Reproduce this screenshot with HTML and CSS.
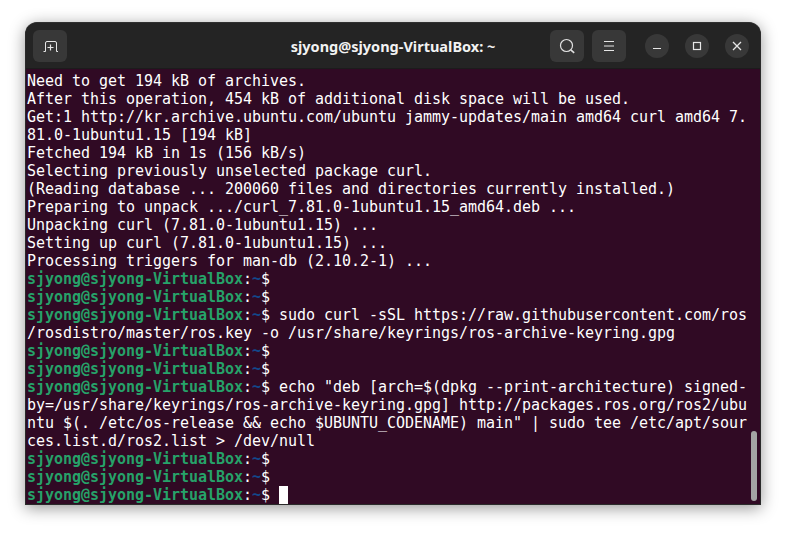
FILE: index.html
```html
<!DOCTYPE html>
<html lang="en">
<head>
<meta charset="utf-8">
<title>sjyong@sjyong-VirtualBox: ~</title>
<link rel="stylesheet" href="styles.css">
</head>
<body>
<div class="window">
<header class="titlebar">
<div class="left">
<button class="tool"><svg width="16" height="12" viewBox="0 0 16 12" fill="none" stroke="#e6e6e6" stroke-width="1"><path d="M1.500 11.500h2V3a1.500 1.500 0 0 1 1.500-1.500h8a1.500 1.500 0 0 1 1.500 1.500v8.500h1.500"/><path d="M8.500 4.500v6M5.500 7.500h6" stroke-width="1.200"/></svg></button>
</div>
<div class="title">sjyong@sjyong-VirtualBox: ~</div>
<div class="right">
<div class="tools">
<button class="tool"><svg width="16" height="16" viewBox="0 0 16 16" fill="none" stroke="#e0e0e0" stroke-width="1.200"><circle cx="7.500" cy="7.500" r="6"/><path d="M11.800 11.800l3.400 3" stroke-width="1.600"/></svg></button>
<button class="tool"><svg width="12" height="12" viewBox="0 0 12 12" fill="none" stroke="#e6e6e6" stroke-width="1"><path d="M1 1.500h10M1 6h10M1 10.500h10"/></svg></button>
</div>
<div class="controls">
<button class="ctl"><svg width="10" height="10" viewBox="0 0 10 10" fill="none" stroke="#e6e6e6" stroke-width="1.200"><path d="M1 7.500h8"/></svg></button>
<button class="ctl"><svg width="10" height="10" viewBox="0 0 10 10" fill="none" stroke="#e6e6e6" stroke-width="1.200"><rect x="1.500" y="1.500" width="7" height="7"/></svg></button>
<button class="ctl"><svg width="10" height="10" viewBox="0 0 10 10" fill="none" stroke="#e6e6e6" stroke-width="1.300"><path d="M1 1l8 8M9 1l-8 8"/></svg></button>
</div>
</div>
</header>
<main class="terminal">
<div class="output">
<div class="line">Need to get 194 kB of archives.</div>
<div class="line">After this operation, 454 kB of additional disk space will be used.</div>
<div class="line">Get:1 http://kr.archive.ubuntu.com/ubuntu jammy-updates/main amd64 curl amd64 7.</div>
<div class="line">81.0-1ubuntu1.15 [194 kB]</div>
<div class="line">Fetched 194 kB in 1s (156 kB/s)</div>
<div class="line">Selecting previously unselected package curl.</div>
<div class="line">(Reading database ... 200060 files and directories currently installed.)</div>
<div class="line">Preparing to unpack .../curl_7.81.0-1ubuntu1.15_amd64.deb ...</div>
<div class="line">Unpacking curl (7.81.0-1ubuntu1.15) ...</div>
<div class="line">Setting up curl (7.81.0-1ubuntu1.15) ...</div>
<div class="line">Processing triggers for man-db (2.10.2-1) ...</div>
<div class="line"><b class="user">sjyong@sjyong-VirtualBox</b>:<b class="path">~</b>$</div>
<div class="line"><b class="user">sjyong@sjyong-VirtualBox</b>:<b class="path">~</b>$</div>
<div class="line"><b class="user">sjyong@sjyong-VirtualBox</b>:<b class="path">~</b>$ sudo curl -sSL https://raw.githubusercontent.com/ros</div>
<div class="line">/rosdistro/master/ros.key -o /usr/share/keyrings/ros-archive-keyring.gpg</div>
<div class="line"><b class="user">sjyong@sjyong-VirtualBox</b>:<b class="path">~</b>$</div>
<div class="line"><b class="user">sjyong@sjyong-VirtualBox</b>:<b class="path">~</b>$</div>
<div class="line"><b class="user">sjyong@sjyong-VirtualBox</b>:<b class="path">~</b>$ echo "deb [arch=$(dpkg --print-architecture) signed-</div>
<div class="line">by=/usr/share/keyrings/ros-archive-keyring.gpg] http://packages.ros.org/ros2/ubu</div>
<div class="line">ntu $(. /etc/os-release &amp;&amp; echo $UBUNTU_CODENAME) main" | sudo tee /etc/apt/sour</div>
<div class="line">ces.list.d/ros2.list &gt; /dev/null</div>
<div class="line"><b class="user">sjyong@sjyong-VirtualBox</b>:<b class="path">~</b>$</div>
<div class="line"><b class="user">sjyong@sjyong-VirtualBox</b>:<b class="path">~</b>$</div>
<div class="line"><b class="user">sjyong@sjyong-VirtualBox</b>:<b class="path">~</b>$ <span class="cursor"></span></div>
</div>
<div class="scrollbar"></div>
</main>
</div>
</body>
</html>
```
FILE: styles.css
```css
* { box-sizing: border-box; }
html, body { margin: 0; height: 100%; background: #fff; }
body { padding: 22px 25px 28px; overflow: hidden; }
.window {
  width: 736px;
  height: 483px;
  display: flex;
  flex-direction: column;
  border-radius: 12px 12px 0 0;
  border: 1px solid #2a2a2a;
  border-top-color: #303030;
  background: #242424;
  box-shadow: 0 3px 16px rgba(0,0,0,.42);
  overflow: hidden;
}
.titlebar {
  height: 46px;
  flex: none;
  display: grid;
  grid-template-columns: 1fr auto 1fr;
  align-items: center;
  padding: 0 11px 0 7px;
  background: #242424;
  border-bottom: 1px solid #1c1c1c;
}
.left { display: flex; }
.right { display: flex; justify-content: flex-end; align-items: center; gap: 19px; }
button {
  border: 0;
  padding: 0;
  display: flex;
  align-items: center;
  justify-content: center;
  background: #383838;
  color: #fff;
}
.tool { width: 34px; height: 32px; border-radius: 6px; }
.title {
  font: 700 14.500px "Noto Sans", sans-serif;
  color: #f2f2f2;
  margin-left: 4px;
}
.tools { display: flex; gap: 8px; }
.controls { display: flex; gap: 16px; }
.ctl { width: 24px; height: 24px; border-radius: 50%; }
.terminal {
  position: relative;
  flex: 1;
  min-height: 0;
  background: #300a24;
  padding: 3px 0 0 1px;
}
.output {
  font: 400 15px/18px "DejaVu Sans Mono", monospace;
  letter-spacing: -.03px;
  color: #fff;
}
.line { height: 18px; white-space: pre; }
.user { color: #26a269; }
.path { color: #12488b; }
.cursor {
  display: inline-block;
  width: 9px;
  height: 18px;
  background: #fff;
  vertical-align: top;
}
.scrollbar {
  position: absolute;
  right: 3px;
  bottom: 3px;
  width: 6px;
  height: 70px;
  border-radius: 3px;
  background: #a3a3a3;
}
```
